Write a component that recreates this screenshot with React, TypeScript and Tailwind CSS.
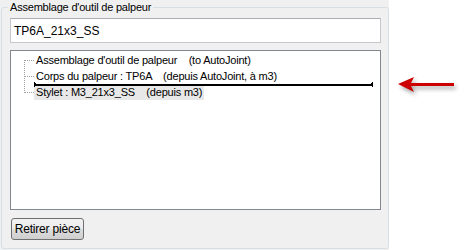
const font = { fontFamily: '"Liberation Sans", Arial, sans-serif' };

type Row = { text: string; kind: 'first' | 'mid' | 'last'; selected?: boolean };

const rows: Row[] = [
  { text: "Assemblage d'outil de palpeur    (to AutoJoint)", kind: 'first' },
  { text: 'Corps du palpeur : TP6A    (depuis AutoJoint, à m3)', kind: 'mid' },
  { text: 'Stylet : M3_21x3_SS    (depuis m3)', kind: 'last', selected: true },
];

function Connector({ kind }: { kind: Row['kind'] }) {
  const y1 = kind === 'first' ? 8 : 0;
  const y2 = kind === 'last' ? 9 : 16;
  return (
    <svg width="23" height="16" className="shrink-0" shapeRendering="crispEdges">
      <line x1="13.5" y1={y1} x2="13.5" y2={y2} stroke="#a0a0a0" strokeDasharray="1 1" />
      <line x1="14" y1="8.5" x2="23" y2="8.5" stroke="#a0a0a0" strokeDasharray="1 1" />
    </svg>
  );
}

export default function App() {
  return (
    <div className="flex w-[474px] h-[250px] bg-white text-[11px] text-black tracking-[-0.2px]" style={font}>
      <div className="w-[389px] h-[250px] bg-[#f0f0f0] pt-[7px] pl-[1px]">
        <div className="relative w-[388px] h-[242px] border border-[#d5dfe5] rounded-[3px] pl-[8px] pt-[10px]">
          <span className="absolute left-[6px] top-[-7px] px-[2px] leading-[13px] bg-[#f0f0f0]">
            Assemblage d'outil de palpeur
          </span>

          <div className="w-[371px] h-[25px] bg-white border border-[#c4c8cc] border-t-[#abadb3] pl-[3px] flex items-center text-[12px] tracking-normal">
            TP6A_21x3_SS
          </div>

          <div className="relative mt-[7px] w-[371px] h-[160px] bg-white border border-[#828790] pt-[1px]">
            {rows.map((r) => (
              <div key={r.text} className="flex h-[16px]">
                <Connector kind={r.kind} />
                <span
                  className={`mt-[1px] h-[15px] leading-[14px] px-[2px] whitespace-pre ${r.selected ? 'bg-[#e8e8e8]' : ''}`}
                >
                  {r.text}
                </span>
              </div>
            ))}
            <svg width="342" height="7" className="absolute left-[22px] top-[30px]" shapeRendering="crispEdges">
              <rect x="1" y="3" width="339" height="2" fill="#000" />
              <rect x="1" y="1" width="1" height="5" fill="#000" />
              <rect x="2" y="2" width="1" height="3" fill="#000" />
              <rect x="339" y="1" width="1" height="5" fill="#000" />
              <rect x="338" y="2" width="1" height="3" fill="#000" />
            </svg>
          </div>

          <button
            className="mt-[8px] ml-[1px] w-[73px] h-[22px] rounded-[3px] border border-[#707070] bg-[linear-gradient(#f2f2f2_0%,#ebebeb_50%,#dddddd_51%,#cfcfcf_100%)] text-[12px] leading-none"
            style={font}
          >
            Retirer pièce
          </button>
        </div>
      </div>

      <div className="flex-1 pl-[9px] pt-[76px]">
        <svg width="62" height="22" viewBox="0 0 62 22" style={{ filter: 'drop-shadow(2px 3px 2px rgba(0,0,0,0.35))' }}>
          <path d="M0 8 L16 1 L13 7 L56 7 L56 10 L13 10 L16 16 Z" fill="#cc0000" />
        </svg>
      </div>
    </div>
  );
}
